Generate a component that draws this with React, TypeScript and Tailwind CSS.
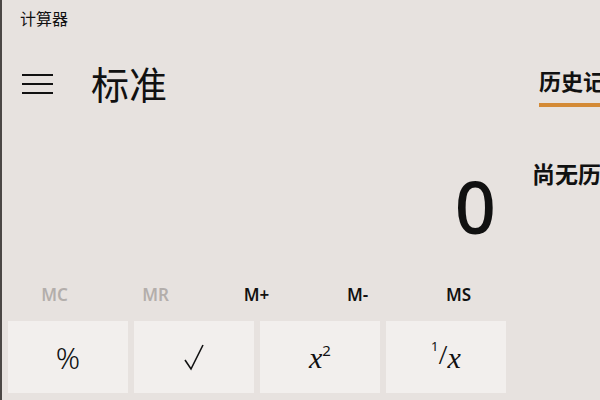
import React from "react";

const FONT = '"Noto Sans", "Noto Sans CJK SC", sans-serif';

const memoryKeys = [
  { label: "MC", enabled: false },
  { label: "MR", enabled: false },
  { label: "M+", enabled: true },
  { label: "M-", enabled: true },
  { label: "MS", enabled: true },
];

function Hamburger() {
  return (
    <div className="flex w-[31px] flex-col gap-[7px]">
      <div className="h-[2px] bg-[#111]" />
      <div className="h-[2px] bg-[#111]" />
      <div className="h-[2px] bg-[#111]" />
    </div>
  );
}

function Key({ children }: { children: React.ReactNode }) {
  return (
    <button className="flex h-[72px] w-[120px] items-center justify-center bg-[#f2efed] text-[#111]">
      {children}
    </button>
  );
}

export default function App() {
  return (
    <div
      className="flex h-[400px] w-[600px] overflow-hidden border-l-2 border-[#4b4745] bg-[#e7e2df] text-[#111]"
      style={{ fontFamily: FONT }}
    >
      {/* Main calculator column */}
      <div className="flex w-[518px] shrink-0 flex-col">
        <div className="flex h-[38px] items-center pl-[18px] text-[16px]">计算器</div>

        <div className="mt-[26px] flex h-[40px] items-center pl-[20px]">
          <Hamburger />
          <span className="ml-[38px] text-[38px] leading-none">标准</span>
        </div>

        <div className="mt-[66px] h-[72px] pr-[24px] text-right text-[72px] leading-[72px] font-medium">0</div>

        {/* Memory row */}
        <div className="mt-[38px] grid h-[30px] w-[507px] grid-cols-5 pl-[2px]">
          {memoryKeys.map((k) => (
            <div
              key={k.label}
              className={`flex items-center justify-center text-[17px] font-semibold ${
                k.enabled ? "text-[#111]" : "text-[#b3aeab]"
              }`}
            >
              {k.label}
            </div>
          ))}
        </div>

        {/* First row of keys */}
        <div className="mt-[11px] flex gap-[6px] pl-[6px]">
          <Key>
            <span className="text-[30px] font-light">%</span>
          </Key>
          <Key>
            <svg width="22" height="28" viewBox="0 0 22 28" fill="none" stroke="#111" strokeWidth="1.6">
              <path d="M2 17 L8 26 L20 2" strokeLinejoin="miter" />
            </svg>
          </Key>
          <Key>
            <span className="text-[30px]" style={{ fontFamily: '"Liberation Serif", serif' }}>
              <i>x</i>
            </span>
            <span className="mb-[14px] text-[15px]">2</span>
          </Key>
          <Key>
            <span className="flex items-start">
              <span className="mt-[2px] text-[13px]">1</span>
              <span className="text-[26px] font-light">/</span>
              <i className="text-[30px]" style={{ fontFamily: '"Liberation Serif", serif' }}>
                x
              </i>
            </span>
          </Key>
        </div>
      </div>

      {/* History panel */}
      <div className="flex flex-1 flex-col whitespace-nowrap">
        <div className="mt-[69px] h-[24px] pl-[19px] text-[22px] leading-[24px] font-bold">历史记录</div>
        <div className="mt-[10px] ml-[19px] h-[4px] bg-[#d48a35]" />
        <div className="mt-[55px] h-[24px] pl-[12px] text-[23px] leading-[24px] font-bold">尚无历史记录</div>
      </div>
    </div>
  );
}
